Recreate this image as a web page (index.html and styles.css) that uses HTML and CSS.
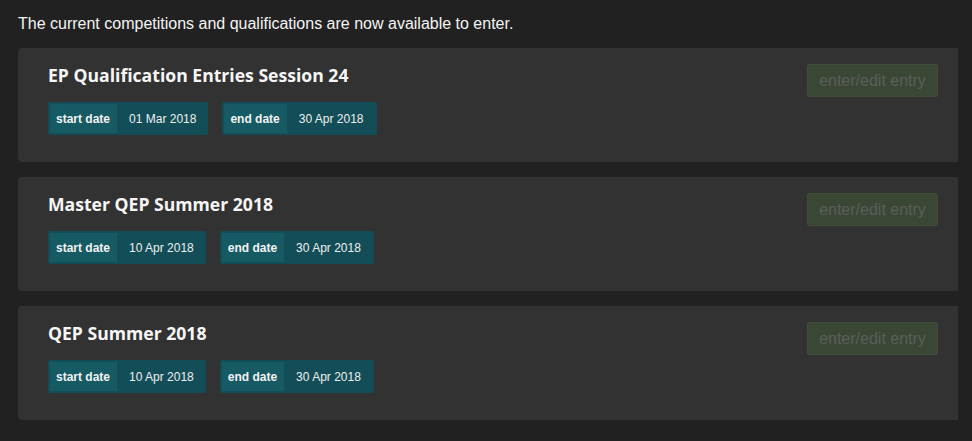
FILE: index.html
```html
<!DOCTYPE html>
<html>
<head>
<meta charset="utf-8">
<link rel="stylesheet" href="styles.css">
</head>
<body>
<div class="page">
  <p class="intro">The current competitions and qualifications are now available to enter.</p>
  <div class="list">
    <div class="card">
      <div class="info">
        <h2 class="title">EP Qualification Entries Session 24</h2>
        <div class="dates">
          <div class="badge"><span class="label">start date</span><span class="value">01 Mar 2018</span></div>
          <div class="badge"><span class="label">end date</span><span class="value">30 Apr 2018</span></div>
        </div>
      </div>
      <button class="btn" disabled>enter/edit entry</button>
    </div>
    <div class="card">
      <div class="info">
        <h2 class="title">Master QEP Summer 2018</h2>
        <div class="dates">
          <div class="badge"><span class="label">start date</span><span class="value">10 Apr 2018</span></div>
          <div class="badge"><span class="label">end date</span><span class="value">30 Apr 2018</span></div>
        </div>
      </div>
      <button class="btn" disabled>enter/edit entry</button>
    </div>
    <div class="card">
      <div class="info">
        <h2 class="title">QEP Summer 2018</h2>
        <div class="dates">
          <div class="badge"><span class="label">start date</span><span class="value">10 Apr 2018</span></div>
          <div class="badge"><span class="label">end date</span><span class="value">30 Apr 2018</span></div>
        </div>
      </div>
      <button class="btn" disabled>enter/edit entry</button>
    </div>
  </div>
</div>
</body>
</html>
```

FILE: styles.css
```css
html, body {
  margin: 0;
  padding: 0;
  background: #212121;
  height: 100%;
}
body {
  font-family: "Liberation Sans", Arial, sans-serif;
  color: #ffffff;
}
.page {
  margin-right: 14px;
  padding: 14px 0 0 18px;
}
.intro {
  margin: 0 0 14px 0;
  font-size: 16px;
  line-height: 20px;
  color: #f4f4f4;
}
.list {
  display: flex;
  flex-direction: column;
  gap: 15px;
}
.card {
  display: flex;
  justify-content: space-between;
  align-items: flex-start;
  background: #323232;
  border-radius: 4px 0 0 4px;
  padding: 16px 20px 27px 30px;
  height: 71px;
}
.title {
  margin: 0 0 16px 0;
  font-family: "Open Sans", "Lato", sans-serif;
  font-weight: 700;
  font-size: 17.6px;
  line-height: 22px;
  color: #f6f6f6;
}
.dates {
  display: flex;
  gap: 14px;
}
.badge {
  display: flex;
  align-items: stretch;
  background: #134e58;
  border-radius: 2px;
  padding: 2px 0 2px 2px;
  height: 29px;
  font-size: 12px;
}
.label {
  display: flex;
  align-items: center;
  background: #165a64;
  padding: 0 7px 0 6px;
  font-weight: 700;
  color: #f2f2f2;
}
.value {
  display: flex;
  align-items: center;
  padding: 0 12px 0 12px;
  color: #eeeeee;
}
.badge + .badge .value {
  padding-right: 13px;
}
.btn {
  background: #3a4735;
  border: 1px solid #3f4d39;
  border-radius: 2px;
  color: #5c5e5a;
  font-family: "Liberation Sans", Arial, sans-serif;
  font-size: 16px;
  width: 131px;
  height: 33px;
  padding: 0;
  cursor: default;
}
```
